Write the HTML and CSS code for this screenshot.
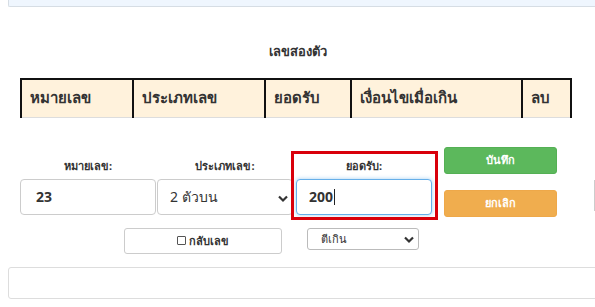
FILE: index.html
```html
<!DOCTYPE html>
<html lang="th">
<head>
<meta charset="utf-8">
<link rel="stylesheet" href="styles.css">
</head>
<body>
<div class="topbar"></div>
<h3 class="title">เลขสองตัว</h3>
<div class="table-row">
  <table class="grid">
    <thead>
      <tr>
        <th class="c1">หมายเลข</th>
        <th class="c2">ประเภทเลข</th>
        <th class="c3">ยอดรับ</th>
        <th class="c4">เงื่อนไขเมื่อเกิน</th>
        <th class="c5">ลบ</th>
      </tr>
    </thead>
  </table>
  <div class="side-edge"></div>
</div>
<div class="form">
  <div class="field f1">
    <label class="lbl">หมายเลข:</label>
    <div class="input bold">23</div>
  </div>
  <div class="field f2">
    <label class="lbl">ประเภทเลข:</label>
    <div class="input select">2 ตัวบน
      <svg class="chev" width="10" height="8" viewBox="0 0 10 8"><path d="M1 1.5 L5 5.5 L9 1.5" fill="none" stroke="#333" stroke-width="2.2"/></svg>
    </div>
  </div>
  <div class="field f3">
    <label class="lbl">ยอดรับ:</label>
    <div class="input bold focus">200<span class="caret"></span></div>
    <div class="redbox"></div>
  </div>
  <div class="buttons">
    <button class="btn green">บันทึก</button>
    <button class="btn orange">ยกเลิก</button>
  </div>
  <div class="side-edge2"></div>
</div>
<div class="row2">
  <div class="chk-btn"><span class="box"></span>กลับเลข</div>
  <div class="small-select">ตีเกิน
    <svg class="chev" width="10" height="8" viewBox="0 0 10 8"><path d="M1 1.5 L5 5.5 L9 1.5" fill="none" stroke="#333" stroke-width="2.2"/></svg>
  </div>
</div>
<div class="bottom-box"></div>
</body>
</html>
```
FILE: styles.css
```css
* { box-sizing: border-box; }
html, body { margin: 0; padding: 0; background: #fff; overflow: hidden; }
body {
  width: 595px; height: 307px;
  font-family: Tahoma, "Noto Sans", "DejaVu Sans", sans-serif;
  color: #333;
}
.topbar {
  margin-left: 8px;
  width: 600px;
  height: 7px;
  background: #eff6fe;
  border-left: 1px solid #d6dde4;
  border-bottom: 1px solid #d6dde4;
  border-bottom-left-radius: 2px;
}
.title {
  margin: 34px 0 0 0;
  height: 20px;
  line-height: 20px;
  text-align: center;
  font-size: 13px;
  font-weight: bold;
  color: #333;
}
.table-row {
  display: flex;
  margin-top: 17px;
  margin-left: 20px;
  position: relative;
}
.grid {
  flex: none;
  border-collapse: collapse;
  table-layout: fixed;
  width: 550px;
}
.grid th {
  background: #fff2dc;
  border-top: 2px solid #111;
  border-left: 2px solid #111;
  border-right: 2px solid #111;
  border-bottom: 1px solid #ddd;
  height: 38px;
  padding: 0 0 0 8px;
  text-align: left;
  font-size: 15px;
  font-weight: bold;
  color: #333;
  white-space: nowrap;
}
.grid .c1 { width: 112px; }
.grid .c2 { width: 132px; }
.grid .c3 { width: 86px; }
.grid .c4 { width: 171px; }
.grid .c5 { width: 49px; }
.side-edge {
  flex: none;
  margin-left: 24px;
  width: 10px;
  height: 38px;
  border-left: 2px solid #111;
  border-top: 2px solid #111;
}
.form {
  display: flex;
  margin-top: 29px;
  margin-left: 20px;
  height: 72px;
  position: relative;
}
.field {
  width: 136px;
  display: flex;
  flex-direction: column;
  align-items: center;
  position: relative;
}
.f2 { margin-left: 1px; }
.f3 { margin-left: 3px; }
.lbl {
  margin-top: 11px;
  height: 15px;
  line-height: 15px;
  font-size: 11px;
  font-weight: bold;
  color: #333;
}
.input {
  margin-top: 6px;
  width: 136px;
  height: 36px;
  border: 1px solid #ccc;
  border-radius: 4px;
  padding: 0 15px;
  display: flex;
  align-items: center;
  font-size: 14px;
  color: #333;
  background: #fff;
}
.bold { font-weight: bold; }
.select { padding-left: 12px; position: relative; }
.select .chev { position: absolute; right: 4px; top: 15px; }
.focus {
  border-color: #66afe9;
  box-shadow: 0 0 4px rgba(102, 175, 233, 0.6);
  padding-left: 12px;
}
.caret {
  display: inline-block;
  width: 1px;
  height: 16px;
  background: #222;
  margin-left: 1px;
}
.redbox {
  position: absolute;
  left: -5px; top: 4px;
  width: 147px; height: 69px;
  border: 3px solid #d9000b;
}
.buttons {
  margin-left: 12px;
  display: flex;
  flex-direction: column;
}
.btn {
  width: 113px;
  height: 27px;
  border: 1px solid transparent;
  border-radius: 3px;
  color: #fff;
  font-family: inherit;
  font-size: 11px;
  font-weight: bold;
  padding: 0;
}
.green { background: #5cb85c; border-color: #54b054; }
.orange { background: #f0ad4e; border-color: #eea849; margin-top: 16px; }
.side-edge2 {
  position: absolute;
  left: 574px; top: 33px;
  width: 10px; height: 31px;
  border-left: 1px solid #ccc;
}
.row2 {
  display: flex;
  align-items: flex-start;
  margin-top: 9px;
  margin-left: 124px;
  height: 26px;
}
.chk-btn {
  width: 158px;
  height: 26px;
  border: 1px solid #ccc;
  border-radius: 3px;
  display: flex;
  align-items: center;
  justify-content: center;
  font-size: 11px;
  font-weight: bold;
  color: #333;
}
.box {
  width: 9px; height: 9px;
  border: 1px solid #555;
  border-radius: 1px;
  margin-right: 3px;
}
.small-select {
  margin-left: 25px;
  width: 112px;
  height: 22px;
  border: 1px solid #bbb;
  border-radius: 3px;
  display: flex;
  align-items: center;
  padding-left: 13px;
  font-size: 11px;
  color: #333;
  position: relative;
}
.small-select .chev { position: absolute; right: 4px; top: 7px; }
.bottom-box {
  margin-top: 13px;
  margin-left: 8px;
  width: 600px;
  height: 32px;
  border: 1px solid #ddd;
  border-radius: 3px;
}
```
